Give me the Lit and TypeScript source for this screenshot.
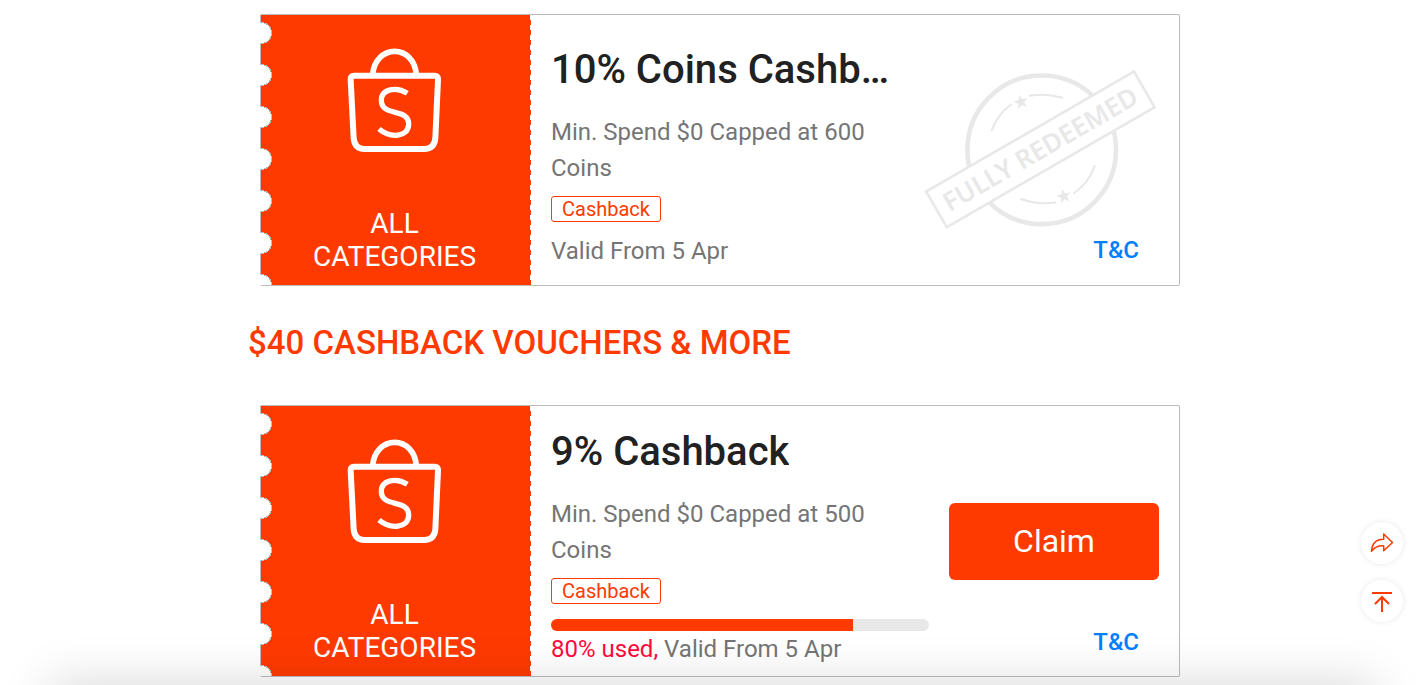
import { LitElement, html, css, nothing } from "lit";
import { customElement, property } from "lit/decorators.js";

interface Voucher {
  title: string;
  terms: string;
  tag: string;
  used?: number;
  validity: string;
}

const STAR = "M0 -7.5 L1.9 -2.4 L7.2 -2.3 L3 1 L4.5 6.2 L0 3.2 L-4.5 6.2 L-3 1 L-7.2 -2.3 L-1.9 -2.4 Z";

const bagIcon = html`
  <svg class="bag" viewBox="0 0 390 420" fill="none" stroke="#fff" aria-hidden="true">
    <path stroke-width="18" d="M72 137 H314 Q325 137 324 149 L316 325 Q313 357 283 357 H103 Q74 357 71 325 L62 149 Q61 137 72 137 Z" />
    <path stroke-width="17" d="M128 134 C131 92 160 64 194 64 C228 64 256 92 259 134" />
    <path stroke-width="16" d="M232 190 C198 168 154 178 154 211 C154 262 236 232 236 282 C236 323 180 325 147 297" />
  </svg>
`;

const stamp = html`
  <svg class="stamp" viewBox="924 69 234 161" role="img" aria-label="Fully redeemed" fill="none" stroke="#e8e8e8">
    <circle cx="1041.7" cy="149.8" r="74.3" stroke-width="4.6" />
    <g stroke-width="2" stroke-linecap="round">
      <path d="M991.7 130.3 A55 55 0 0 1 1011 104.6" />
      <path d="M1029.5 95.8 A70 70 0 0 1 1062 97.7" />
      <path d="M1021 199 A72 72 0 0 0 1055.3 202.6" />
      <path d="M1073.9 193.3 A55 55 0 0 0 1094.7 165.9" />
    </g>
    <g fill="#e8e8e8" stroke="none">
      <path transform="translate(1021 102) rotate(-14)" d=${STAR} />
      <path transform="translate(1063.8 196.2) rotate(-14)" d=${STAR} />
    </g>
    <g transform="translate(1040.4 149.4) rotate(-30)">
      <rect x="-120" y="-20.6" width="240" height="41.2" fill="#fff" stroke-width="2.6" />
      <text class="stamp-text" x="0" y="9" text-anchor="middle">FULLY REDEEMED</text>
    </g>
  </svg>
`;

@customElement("voucher-card")
export class VoucherCard extends LitElement {
  @property({ attribute: false }) voucher!: Voucher;

  static styles = css`
    :host {
      display: block;
    }
    .card {
      display: grid;
      grid-template-columns: 271px minmax(0, 1fr) 250px;
      min-height: 272px;
      box-sizing: border-box;
      border: 1px solid #bbb;
      border-left: 0;
      border-radius: 2px;
      background: #fff;
    }
    .category {
      display: flex;
      flex-direction: column;
      align-items: center;
      justify-content: space-between;
      box-sizing: border-box;
      padding: 15px 2px 12px 0;
      color: #fff;
      font-size: 28px;
      line-height: 33px;
      text-align: center;
      background:
        radial-gradient(circle at 1px 18px, #fff 10px, #bbb 10px 11px, transparent 11px) 0 0 / 12px 42px repeat-y,
        linear-gradient(#bbb, #bbb) 0 0 / 1px 100% no-repeat,
        repeating-linear-gradient(#fff 0 5px, #ff3a00 5px 10px) 100% 0 / 1px 100% no-repeat,
        #ff3a00;
    }
    .category-name {
      margin: 0;
      width: 180px;
    }
    .bag {
      width: 130px;
      height: 140px;
    }
    .details {
      display: flex;
      flex-direction: column;
      justify-content: center;
      align-items: flex-start;
      padding: 14px 0 0 20px;
      font-size: 24px;
      line-height: 36px;
      color: #757575;
    }
    .details.claimable {
      padding-top: 12px;
    }
    .title {
      margin: 0 0 20px;
      max-width: 100%;
      overflow: hidden;
      white-space: nowrap;
      text-overflow: ellipsis;
      font-size: 40px;
      line-height: 48px;
      font-weight: 500;
      color: #212121;
    }
    .terms,
    .validity {
      margin: 0;
    }
    .tag {
      margin: 10px 0 11px;
      padding: 0 10px;
      border: 1px solid #ff3a00;
      border-radius: 3px;
      font-size: 20px;
      line-height: 24px;
      color: #ff3a00;
    }
    .claimable .tag {
      margin-bottom: 15px;
    }
    .bar {
      width: 100%;
      height: 12px;
      border-radius: 6px;
      overflow: hidden;
      background: #e8e8e8;
    }
    .fill {
      height: 100%;
      background: #ff3a00;
    }
    .used {
      color: #ff0a3c;
    }
    .actions {
      display: flex;
      flex-direction: column;
      justify-content: space-between;
      padding: 54px 20px 18px;
    }
    .actions.claimable {
      padding: 97px 20px 17px;
    }
    .stamp {
      width: 234px;
      height: 161px;
      align-self: flex-end;
      margin-right: 1px;
    }
    .stamp-text {
      fill: #e8e8e8;
      stroke: none;
      font-family: "Noto Sans", sans-serif;
      font-size: 26px;
      font-weight: 600;
    }
    .claim {
      height: 77px;
      padding: 0 0 2px;
      border: 0;
      border-radius: 6px;
      background: #ff3a00;
      color: #fff;
      font: 400 32px/38px Roboto, sans-serif;
      cursor: pointer;
    }
    .tnc {
      align-self: flex-end;
      margin-right: 20px;
      font-size: 24px;
      line-height: 34px;
      font-weight: 500;
      color: #0080ff;
      text-decoration: none;
    }
  `;

  render() {
    const v = this.voucher;
    const active = v.used !== undefined;
    const state = active ? "claimable" : "";
    return html`
      <article class="card">
        <div class="category">
          ${bagIcon}
          <p class="category-name">ALL CATEGORIES</p>
        </div>
        <div class="details ${state}">
          <h3 class="title">${v.title}</h3>
          <p class="terms">${v.terms}</p>
          <span class="tag">${v.tag}</span>
          ${active
            ? html`<div class="bar" role="progressbar" aria-label="Vouchers used" aria-valuenow=${v.used!}>
                <div class="fill" style="width: ${v.used}%"></div>
              </div>`
            : nothing}
          <p class="validity">
            ${active ? html`<span class="used">${v.used}% used,</span>` : nothing} ${v.validity}
          </p>
        </div>
        <div class="actions ${state}">
          ${active ? html`<button class="claim" type="button">Claim</button>` : stamp}
          <a class="tnc" href="#terms">T&amp;C</a>
        </div>
      </article>
    `;
  }
}

@customElement("app-root")
export class AppRoot extends LitElement {
  static styles = css`
    :host {
      display: block;
      min-height: 100vh;
      box-sizing: border-box;
      padding: 14px 0 8px 15px;
      background: #fff;
      font-family: Roboto, sans-serif;
    }
    .content {
      max-width: 920px;
      margin: 0 auto;
    }
    .heading {
      margin: 37px 0 43px -12px;
      font-size: 33px;
      line-height: 39px;
      font-weight: 500;
      color: #ff3a00;
    }
    .floating {
      position: fixed;
      right: 22px;
      bottom: 63px;
      display: flex;
      flex-direction: column;
      gap: 16px;
    }
    .round {
      display: grid;
      place-items: center;
      width: 42px;
      height: 42px;
      padding: 0;
      border: 0;
      border-radius: 50%;
      background: #fff;
      box-shadow: 0 0 6px rgba(0, 0, 0, 0.09);
      cursor: pointer;
    }
    .round svg {
      width: 24px;
      height: 24px;
    }
    .edge-shadow {
      position: fixed;
      top: 100%;
      left: 50px;
      right: 50px;
      height: 60px;
      box-shadow: 0 0 50px rgba(0, 0, 0, 0.17);
      pointer-events: none;
    }
  `;

  private redeemed: Voucher = {
    title: "10% Coins Cashb…",
    terms: "Min. Spend $0 Capped at 600 Coins",
    tag: "Cashback",
    validity: "Valid From 5 Apr",
  };

  private available: Voucher = {
    title: "9% Cashback",
    terms: "Min. Spend $0 Capped at 500 Coins",
    tag: "Cashback",
    used: 80,
    validity: "Valid From 5 Apr",
  };

  render() {
    return html`
      <main class="content">
        <voucher-card .voucher=${this.redeemed}></voucher-card>
        <h2 class="heading">$40 CASHBACK VOUCHERS &amp; MORE</h2>
        <voucher-card .voucher=${this.available}></voucher-card>
      </main>
      <div class="edge-shadow"></div>
      <div class="floating">
        <button class="round" type="button" aria-label="Share">
          <svg viewBox="0 0 24 24" fill="none" stroke="#ff3a00" stroke-width="1.5" stroke-linejoin="round">
            <path d="M1.5 20.3 C2 12.5 6.5 8.2 13.7 8.2 V3 L22.5 11.5 L13.7 19.7 V14.7 C8.5 14.4 4.5 16 1.5 20.3 Z" />
          </svg>
        </button>
        <button class="round" type="button" aria-label="Back to top">
          <svg viewBox="0 0 24 24" fill="none" stroke="#ff3a00" stroke-width="2">
            <path d="M2 4 H22 M12 23 V8 M5 15 L12 8 L19 15" />
          </svg>
        </button>
      </div>
    `;
  }
}
